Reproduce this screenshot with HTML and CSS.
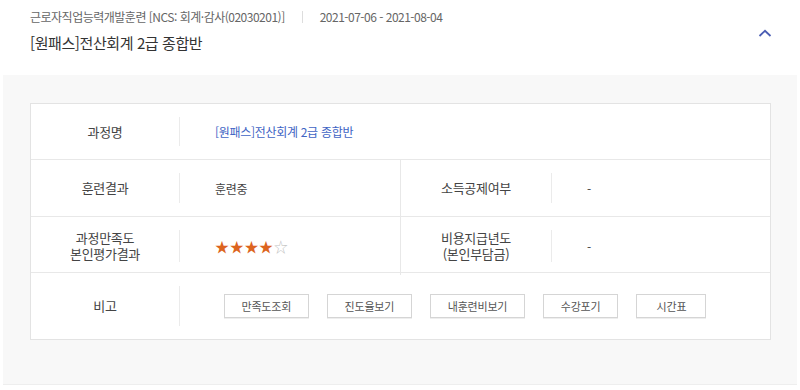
FILE: index.html
```html
<!DOCTYPE html>
<html lang="ko">
<head>
  <meta charset="UTF-8">
  <title>수강내역</title>
  <link rel="stylesheet" href="styles.css">
</head>
<body>
  <div class="course">
    <div class="course-head">
      <div class="course-info">
        <p class="course-meta">
          <span>근로자직업능력개발훈련 [NCS: 회계·감사(02030201)]</span>
          <span class="bar"></span>
          <span>2021-07-06 - 2021-08-04</span>
        </p>
        <h2 class="course-title">[원패스]전산회계 2급 종합반</h2>
      </div>
      <button class="toggle" aria-label="접기">
        <svg width="14" height="8" viewBox="0 0 14 8"><path d="M1.5 7 L7 1.8 L12.5 7" fill="none" stroke="#4a5db3" stroke-width="1.8"/></svg>
      </button>
    </div>

    <div class="course-body">
      <div class="detail">
        <div class="row">
          <div class="th"><span>과정명</span></div>
          <div class="td"><a href="#" class="link">[원패스]전산회계 2급 종합반</a></div>
        </div>
        <div class="row split tall">
          <div class="th"><span>훈련결과</span></div>
          <div class="td">훈련중</div>
          <div class="th side"><span>소득공제여부</span></div>
          <div class="td">-</div>
        </div>
        <div class="row split">
          <div class="th"><span>과정만족도<br>본인평가결과</span></div>
          <div class="td">
            <span class="stars">
              <span class="on">★</span><span class="on">★</span><span class="on">★</span><span class="on">★</span><span class="off">☆</span>
            </span>
          </div>
          <div class="th side"><span>비용지급년도<br>(본인부담금)</span></div>
          <div class="td">-</div>
        </div>
        <div class="row last">
          <div class="th"><span>비고</span></div>
          <div class="td btns">
            <button class="btn">만족도조회</button>
            <button class="btn">진도율보기</button>
            <button class="btn">내훈련비보기</button>
            <button class="btn">수강포기</button>
            <button class="btn">시간표</button>
          </div>
        </div>
      </div>
    </div>
  </div>
</body>
</html>
```

FILE: styles.css
```css
/* course history item */
body {
  margin: 0;
  background-color: #fff;
  color: #333;
  font-family: "Noto Sans CJK KR", "Noto Sans", sans-serif;
}

.course-head {
  display: flex;
  justify-content: space-between;
  align-items: flex-start;
  padding: 7px 28px 0 30px;
  height: 68px;
}

.course-meta {
  margin: 0;
  font-size: 12px;
  color: #666;
  letter-spacing: -0.5px;
  display: flex;
  align-items: center;
  gap: 17px;
  line-height: 20px;
}

.course-meta .bar {
  width: 1px;
  height: 12px;
  background-color: #ddd;
}

.course-title {
  margin: 5px 0 0;
  font-size: 15px;
  font-weight: normal;
  color: #333;
  letter-spacing: -0.4px;
  line-height: 22px;
}

.toggle {
  background: none;
  border: none;
  padding: 0;
  margin-top: 22px;
  width: 14px;
  height: 8px;
  cursor: pointer;
  display: flex;
}

.course-body {
  margin: 0 3px;
  background-color: #f8f8f8;
  border-bottom: 1px solid #eee;
  padding: 28px 26px 44px 27px;
}

.detail {
  background-color: #fff;
  border: 1px solid #e3e3e3;
  font-size: 12px;
  color: #444;
}

.row {
  box-sizing: border-box;
  display: grid;
  grid-template-columns: 149px 1fr;
  height: 56px;
  border-bottom: 1px solid #e8e8e8;
}

.row.tall {
  height: 57px;
}

.row.split {
  grid-template-columns: 149px 220px 152px 1fr;
}

.row.last {
  height: 66px;
  border-bottom: none;
}

.th {
  display: flex;
  padding: 13px 0;
}

.th span {
  flex: 1;
  display: flex;
  align-items: center;
  justify-content: center;
  text-align: center;
  border-right: 1px solid #ebebeb;
  font-size: 13px;
  line-height: 16px;
  color: #444;
  letter-spacing: -0.3px;
}

.th.side {
  border-left: 1px solid #e8e8e8;
}

.td {
  display: flex;
  align-items: center;
  padding-left: 35px;
  letter-spacing: -0.3px;
}

.link {
  color: #4164c4;
  text-decoration: none;
}

.stars {
  display: flex;
  gap: 1px;
  font-size: 14px;
  line-height: 14px;
}

.stars .on {
  color: #dc6420;
}

.stars .off {
  color: #c4c4c4;
}

.btns {
  padding-left: 44px;
  gap: 18.5px;
}

.btn {
  height: 24px;
  padding: 0 16.5px;
  min-width: 70px;
  background-color: #fff;
  border: 1px solid #d5d5d5;
  box-shadow: 0 1px 0 #eee;
  font-family: inherit;
  font-size: 11px;
  color: #555;
  letter-spacing: -0.2px;
  cursor: pointer;
}
```
